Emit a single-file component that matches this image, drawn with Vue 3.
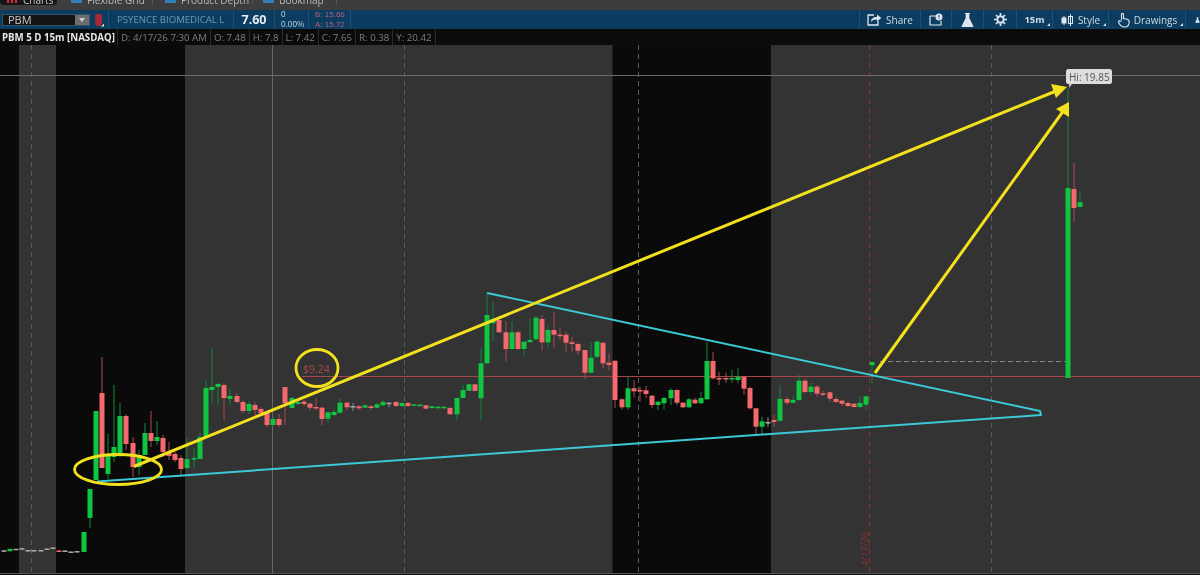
<template>
  <div class="platform">
    <div class="tabs">
      <div v-for="t in tabs" :key="t.name" class="tab" :class="{ on: t.active }" :style="{ width: t.w + 'px', paddingLeft: t.pad + 'px' }">
        <span class="tab-icon" :class="t.tone"></span>
        <span class="tab-name">{{ t.name }}</span>
      </div>
    </div>

    <div class="toolbar">
      <div class="symbol">
        <span>PBM</span>
        <span class="symbol-drop"><i></i></span>
      </div>
      <svg class="link-icon" width="11" height="14" viewBox="0 0 11 14">
        <path d="M1.500 1h5.500l1 1.500v8L6.500 13H2.500L1 10.500z" fill="#a82a35" />
        <path d="M7 13.500l3-3v3z" fill="#e4e4e4" />
      </svg>
      <span class="sep first"></span>
      <span class="company">PSYENCE BIOMEDICAL L</span>
      <span class="sep"></span>
      <span class="last">7.60</span>
      <span class="sep"></span>
      <div class="change"><span>0</span><span>0.00%</span></div>
      <span class="sep"></span>
      <div class="bidask"><span>B: 15.66</span><span>A: 15.72</span></div>
      <span class="sep"></span>

      <div class="tools">
        <span class="sep"></span>
        <div class="tool share">
          <svg width="15" height="13" viewBox="0 0 15 13" fill="none" stroke="#dfe7ee" stroke-width="1.3">
            <path d="M7 2H1v10h10V8" />
            <path d="M4 9c0-3 2-5 6-5V1.500l4.300 3.500L10 8.500V6.500c-3 0-5 .8-6 2.500z" fill="#dfe7ee" stroke="none" />
          </svg>
          <span>Share</span>
        </div>
        <span class="sep"></span>
        <div class="tool alert">
          <svg width="14" height="13" viewBox="0 0 14 13" fill="none">
            <path d="M1 3h7M1 3v9h11V8" stroke="#dfe7ee" stroke-width="1.200" />
            <circle cx="10" cy="4" r="3.500" fill="#dfe7ee" />
            <path d="M10 2v2.500M10 5.300v.8" stroke="#0c3d60" stroke-width="1" />
          </svg>
        </div>
        <span class="sep"></span>
        <div class="tool flask">
          <svg width="13" height="16" viewBox="0 0 13 16">
            <path d="M4 1h5v1H8.300v4l4 8c.2.6 0 1-.7 1H1.400c-.7 0-.9-.4-.7-1l4-8V2H4z" fill="#dfe7ee" />
          </svg>
        </div>
        <span class="sep"></span>
        <div class="tool gear">
          <svg width="13" height="13" viewBox="0 0 13 13">
            <circle cx="6.500" cy="6.500" r="3.200" fill="none" stroke="#dfe7ee" stroke-width="2" />
            <path d="M6.500 0v13M0 6.500h13M2 2l9 9M11 2l-9 9" stroke="#dfe7ee" stroke-width="1.700" stroke-dasharray="2.500 8 2.500" />
          </svg>
        </div>
        <span class="sep"></span>
        <div class="tool period"><b>15m</b><i class="corner"></i></div>
        <span class="sep"></span>
        <div class="tool style">
          <svg width="13" height="14" viewBox="0 0 13 14" fill="none" stroke="#dfe7ee">
            <path d="M3 3v9M9.500 1v12" />
            <rect x="1" y="5" width="4" height="5" fill="#dfe7ee" />
            <rect x="7.500" y="3.500" width="4" height="7" />
          </svg>
          <span>Style</span><i class="corner"></i>
        </div>
        <span class="sep"></span>
        <div class="tool drawings">
          <svg width="13" height="16" viewBox="0 0 13 16" fill="none" stroke="#dfe7ee" stroke-width="1.100">
            <path d="M4.500 8V2.300c0-1.500 2-1.500 2 0V6.500l3.500.8c1.500.4 2.300 1.200 2.200 2.700-.1 2.500-1 5-4.500 5-3 0-4.500-1-6-4.500C1 9 3 8 4.500 9.500" />
          </svg>
          <span>Drawings</span><i class="corner"></i>
        </div>
        <span class="sep"></span>
        <div class="tool flask-end">
          <svg width="13" height="16" viewBox="0 0 13 16">
            <path d="M4 1h5v1H8.300v4l4 8c.2.6 0 1-.7 1H1.400c-.7 0-.9-.4-.7-1l4-8V2H4z" fill="#dfe7ee" />
          </svg>
        </div>
      </div>
    </div>

    <div class="infobar">
      <span class="title">PBM 5 D 15m [NASDAQ]</span>
      <span v-for="c in quote" :key="c">{{ c }}</span>
    </div>

    <svg class="chart" viewBox="0 45 1200 528" width="1200" height="528">
      <rect x="0" y="45" width="1200" height="528" fill="#333333" />
      <rect v-for="b in nightBands" :key="b[0]" :x="b[0]" y="45" :width="b[1]" height="528" fill="#0a0a0a" />

      <line x1="0" y1="75.500" x2="1200" y2="75.500" stroke="#6b6b6b" />
      <line x1="272.500" y1="45" x2="272.500" y2="573" stroke="#666" />
      <line v-for="x in dashedDays" :key="x" :x1="x" y1="45" :x2="x" y2="573" stroke="#5c5c5c" stroke-dasharray="5 4" />
      <line x1="869.500" y1="45" x2="869.500" y2="573" stroke="#8c3036" stroke-dasharray="5 4" />
      <line x1="302" y1="376.500" x2="1200" y2="376.500" stroke="#a8444a" />
      <text class="price" x="303" y="373">$9.24</text>
      <text class="date" transform="translate(868 566) rotate(-90)">4/17/26</text>

      <g v-for="c in candles" :key="c[0]">
        <line :x1="c[0]" :y1="c[1]" :x2="c[0]" :y2="c[2]" :stroke="wickColor[c[5]]" />
        <rect :x="c[0] - 2.500" :y="c[3]" width="5" :height="Math.max(c[4] - c[3], 1.500)" :fill="bodyColor[c[5]]" />
      </g>

      <line x1="880" y1="361.500" x2="1065" y2="361.500" stroke="#8a8a8a" stroke-dasharray="5 3" />

      <path d="M487 293L1040 411L1041 415L97 481.500" fill="none" stroke="#3cc8d6" stroke-width="2" stroke-linejoin="round" />

      <g fill="none" stroke="#f4e11d" stroke-width="2.800">
        <ellipse cx="118" cy="469.500" rx="43.500" ry="15" />
        <ellipse cx="317" cy="368" rx="21" ry="18.500" />
        <line x1="134" y1="466.500" x2="1056" y2="91" stroke-width="3" />
        <line x1="875" y1="373" x2="1064" y2="110" stroke-width="3" />
      </g>
      <polygon points="1051,84 1067,87 1056,98" fill="#f4e11d" />
      <polygon points="1056,109 1069,102 1069,117" fill="#f4e11d" />

      <path d="M1069 88l4-5h-4z" fill="#bdbdbd" />
      <rect x="1066" y="69" width="46" height="15" rx="2.500" fill="#dcdcdc" />
      <text class="hi" x="1069" y="81">Hi: 19.85</text>
    </svg>
    <div class="chart-edge"></div>
  </div>
</template>

<script setup>
const tabs = [
  { name: 'Charts', w: 57, pad: 7, tone: 'red', active: true },
  { name: 'Flexible Grid', w: 93, pad: 11, tone: 'blue' },
  { name: 'Product Depth', w: 100, pad: 12, tone: 'blue' },
  { name: 'Bookmap', w: 84, pad: 10, tone: 'blue' },
]

const quote = ['D: 4/17/26 7:30 AM', 'O: 7.48', 'H: 7.8', 'L: 7.42', 'C: 7.65', 'R: 0.38', 'Y: 20.42']

const nightBands = [[0, 19], [56, 129], [612.5, 158.5]]
const dashedDays = [31.5, 404.5, 638.5, 991.5]

const bodyColor = { g: '#10c540', r: '#f4696d', n: '#a9a9a9' }
const wickColor = { g: '#12863a', r: '#a94a50', n: '#8a8a8a' }

// x, wick top, wick bottom, body top, body bottom, colour
const candles = [
  [4, 550, 552, 550.3, 551.5, 'n'], [10, 549, 551, 548.8, 551.2, 'g'], [16, 549, 550, 548.8, 550, 'n'],
  [22, 548, 549.5, 548.2, 549.5, 'n'], [28, 550, 551.5, 550, 551.5, 'n'], [34, 550, 551.5, 550, 551.5, 'n'],
  [41, 550, 551.5, 550, 551.5, 'n'], [47, 548.5, 550, 548.5, 550, 'n'], [53, 547.5, 549, 547.5, 549, 'n'],
  [59, 550, 552, 550.5, 552, 'r'], [65, 550.5, 552, 550.5, 552, 'n'], [71, 551.5, 553, 551.5, 553, 'n'],
  [77, 551, 552.5, 551, 552.5, 'n'],
  [84, 532, 552, 532, 552, 'g'], [90, 489, 528, 489, 518, 'g'], [96, 411, 480, 411, 480, 'g'],
  [102, 357, 468, 393, 468, 'r'], [108, 434, 479, 455, 474, 'g'], [114, 385, 462, 447, 457, 'g'],
  [120, 403, 457, 416, 453, 'g'], [126, 414, 450, 416, 444, 'r'], [133, 437, 477, 443, 467, 'r'],
  [139, 450, 475, 455, 467, 'g'], [145, 423, 455, 433, 455, 'g'], [151, 411, 447, 433, 441, 'r'],
  [157, 421, 445, 437, 441, 'g'], [163, 435, 457, 438, 452, 'r'], [169, 442, 460, 452, 456, 'r'],
  [175, 452, 462, 454, 460, 'r'], [181, 455, 475, 458, 469, 'r'], [187, 438, 470, 459, 468, 'g'],
  [194, 448, 468, 458, 459.5, 'g'], [200, 433, 459, 437, 459, 'g'], [206, 381, 437, 388, 437, 'g'],
  [212, 348, 403, 387, 390, 'g'], [218, 383, 405, 384, 387, 'g'], [224, 383, 420, 385, 398, 'r'],
  [230, 388, 405, 396, 399, 'g'], [237, 393, 403, 396, 402, 'r'], [243, 400, 413, 402, 411, 'r'],
  [249, 401, 414, 404, 411, 'g'], [255, 402, 415, 405, 410, 'r'], [261, 407, 415, 409, 413, 'r'],
  [267, 412, 427, 413, 425, 'r'], [273, 417, 426, 419, 425, 'g'], [279, 414, 427, 419, 425, 'r'],
  [285, 387, 425, 387, 403, 'r'], [292, 397, 408, 398, 408, 'g'], [298, 400, 405, 402, 404, 'g'],
  [304, 400, 406, 401.7, 404, 'r'], [310, 402.7, 410.7, 403.7, 407.7, 'r'], [316, 398, 410, 407, 408, 'r'],
  [322, 406.7, 425, 407.7, 419, 'r'], [328, 411.7, 422.7, 412.3, 418.7, 'g'], [334, 410, 416, 412, 415, 'g'],
  [340, 398, 414, 402.7, 412.7, 'g'], [347, 401.7, 410, 402.7, 407.3, 'r'], [353, 403, 411, 406, 407.3, 'n'],
  [359, 405, 410, 406.3, 408.3, 'r'], [365, 404, 408, 405.3, 407.7, 'g'], [371, 405, 410, 406.3, 408, 'r'],
  [377, 403, 408, 404.3, 407.7, 'g'], [383, 400, 406, 402, 405.3, 'g'], [389, 402.7, 407.3, 402.7, 403.7, 'n'],
  [396, 401, 407, 402, 406, 'r'], [402, 402, 407, 403, 406, 'g'], [408, 402, 407, 403, 406, 'r'],
  [414, 404, 406, 404.3, 405.7, 'g'], [420, 404, 406, 404.7, 406, 'g'], [426, 405, 409, 405.3, 408.7, 'r'],
  [432, 406, 409, 406.3, 408, 'g'], [438, 406, 409, 406.7, 408, 'g'], [444, 406, 409, 406.7, 408, 'g'],
  [450, 407, 415, 408, 414.3, 'r'], [457, 398, 420, 398, 414.3, 'g'], [463, 385, 398.3, 390, 398, 'g'],
  [469, 384, 391, 384.3, 390.7, 'g'], [475, 384, 391, 384.3, 391, 'r'], [481, 348.3, 420, 363.3, 398.3, 'g'],
  [487, 293.3, 363.3, 315, 363.3, 'g'], [493, 301.7, 341.7, 319.3, 323.3, 'g'], [499, 318, 333, 320, 332.3, 'r'],
  [506, 321.7, 361.7, 332.3, 349, 'r'], [512, 321.7, 350, 332.3, 349, 'g'], [518, 330.7, 350, 332.3, 349, 'r'],
  [524, 341.7, 355, 341.7, 349, 'g'], [530, 318.3, 342, 340, 342.3, 'g'], [536, 316, 340, 317.7, 339.3, 'g'],
  [542, 315, 350.7, 319, 342.3, 'r'], [548, 325, 348.3, 330, 342.3, 'g'], [554, 311.7, 348.3, 330, 334.7, 'r'],
  [560, 328.3, 340, 334.7, 335.8, 'r'], [566, 331.7, 351.7, 334.7, 342.7, 'r'], [572, 336.7, 351.7, 342.3, 344, 'r'],
  [578, 342.7, 355, 344, 350.7, 'r'], [585, 350, 379.3, 350, 372.7, 'r'], [591, 341.7, 373.3, 357.7, 372.7, 'g'],
  [597, 340, 358, 341.7, 356.7, 'g'], [603, 342.7, 368.3, 342.7, 363.3, 'r'], [609, 353.3, 370, 362.7, 365, 'r'],
  [615, 360.7, 408.3, 360.7, 400, 'r'], [622, 398.3, 409.3, 399.3, 407.3, 'r'], [628, 376.7, 410, 388.3, 407.3, 'g'],
  [634, 380, 397.3, 388.3, 391.3, 'r'], [640, 386.7, 401.7, 390, 391.3, 'r'], [646, 386, 398.3, 390.3, 394, 'r'],
  [652, 395, 408.3, 395.7, 405, 'r'], [658, 400.7, 410, 401.7, 405, 'g'], [664, 396.7, 409.3, 398, 403.3, 'g'],
  [671, 388.3, 405, 390, 398.3, 'g'], [677, 389.3, 405, 390, 402.7, 'r'], [683, 402, 408, 402.7, 407.3, 'r'],
  [689, 398, 408, 399.3, 407.3, 'g'], [695, 398, 404, 399.7, 403.3, 'r'], [701, 391.7, 404, 398, 403.3, 'g'],
  [707, 341.7, 399.3, 361, 399.3, 'g'], [713, 351.7, 379.3, 361, 378.3, 'r'], [719, 371.7, 385, 378, 379.3, 'r'],
  [726, 372.7, 382.7, 378, 379.3, 'r'], [732, 370, 382.7, 378, 379.3, 'g'], [738, 368.3, 383.3, 376.7, 380, 'g'],
  [744, 376.7, 395, 376.7, 388.7, 'r'], [750, 386.7, 409.3, 388, 408.3, 'r'], [756, 408.3, 435, 408.3, 426.7, 'r'],
  [762, 416.7, 435, 421.3, 426.7, 'g'], [768, 417.3, 427.3, 422, 423.3, 'n'], [774, 415, 426.7, 420, 422, 'r'],
  [780, 385, 421.7, 399, 420.7, 'g'], [787, 396.7, 405, 399, 402.7, 'r'], [793, 396.7, 403.3, 400, 402.7, 'g'],
  [799, 375, 400.7, 380.7, 400, 'g'], [805, 379, 393, 380.7, 392, 'r'], [811, 382.7, 395, 386.7, 392, 'g'],
  [817, 385, 396.7, 386.7, 393.7, 'r'], [823, 390.7, 396, 393.3, 394.7, 'r'], [830, 391.7, 401.7, 392.3, 398.7, 'r'],
  [836, 396.7, 402.7, 399, 402, 'r'], [842, 400, 406, 400.7, 403.7, 'r'], [848, 401.7, 407.3, 403, 406, 'r'],
  [854, 403, 407.5, 403.7, 407, 'r'], [860, 396, 408.3, 403, 407, 'g'], [866, 396.3, 410, 396.3, 404.7, 'g'],
  [872, 362, 384, 362, 365.3, 'g'], [1068, 88, 378, 188, 378, 'g'], [1074, 163, 222, 189, 208, 'r'],
  [1080, 191, 207, 202, 207, 'g'],
]
</script>

<style>
html,
body {
  margin: 0;
  background: #0b0b0b;
}
</style>

<style scoped>
.platform {
  width: 1200px;
  height: 575px;
  overflow: hidden;
  display: flex;
  flex-direction: column;
  font-family: "Open Sans", "Liberation Sans", sans-serif;
  filter: blur(0.35px);
}

.tabs {
  height: 10px;
  flex: none;
  box-sizing: border-box;
  padding-bottom: 5px;
  display: flex;
  align-items: flex-end;
  overflow: hidden;
  background: #3d3d3d;
  color: #b9b9b9;
  font-size: 10px;
  white-space: nowrap;
}

.tab {
  height: 18px;
  flex: none;
  box-sizing: border-box;
  display: flex;
  align-items: flex-end;
  gap: 5px;
  border-right: 1px solid #555;
}

.tab-name {
  line-height: 10px;
}

.tab.on {
  background: #141414;
  border-radius: 0 0 4px 4px;
  margin-right: 3px;
  border-right: 0;
  color: #c9c9c9;
}

.tab-icon {
  width: 11px;
  height: 16px;
  margin-bottom: 2px;
  flex: none;
}

.tab-icon.red {
  background: repeating-linear-gradient(90deg, #b8323a 0 2px, #3a1214 2px 4px);
}

.tab-icon.blue {
  background: #2f7fb8;
}

.toolbar {
  height: 19px;
  flex: none;
  display: flex;
  align-items: center;
  background: #0c3d60;
  color: #dfe7ee;
  font-size: 12px;
}

.symbol {
  width: 88px;
  height: 12px;
  margin-left: 2px;
  box-sizing: border-box;
  display: flex;
  justify-content: space-between;
  align-items: center;
  padding-left: 5px;
  background: #141414;
  border: 1px solid #33546c;
  color: #c9c9c9;
  font-size: 11px;
}

.symbol-drop {
  width: 14px;
  height: 10px;
  display: flex;
  justify-content: center;
  align-items: center;
  background: #6d6d6d;
}

.symbol-drop i {
  border: 3px solid transparent;
  border-top: 4px solid #d0d0d0;
  border-bottom: 0;
}

.link-icon {
  margin-left: 4px;
  flex: none;
}

.sep {
  width: 1px;
  height: 100%;
  flex: none;
  background: #1c5078;
}

.sep.first {
  margin-left: 3px;
}

.company {
  width: 124px;
  padding-left: 8px;
  box-sizing: border-box;
  color: #6e97b6;
  font-size: 9.600px;
  white-space: nowrap;
}

.last {
  width: 40px;
  text-align: center;
  color: #e6edf2;
  font-size: 12.500px;
  font-weight: 700;
}

.change {
  width: 33px;
  padding-left: 6px;
  box-sizing: border-box;
  display: flex;
  flex-direction: column;
  color: #b6c8d6;
  font-family: "Liberation Sans", sans-serif;
  font-size: 8.200px;
  line-height: 9.500px;
}

.bidask {
  width: 41px;
  padding-left: 6px;
  box-sizing: border-box;
  display: flex;
  flex-direction: column;
  color: #b0637c;
  font-family: "Liberation Sans", sans-serif;
  font-size: 8px;
  line-height: 9.500px;
  white-space: nowrap;
}

.tools {
  margin-left: auto;
  height: 100%;
  display: flex;
  align-items: center;
}

.tool {
  height: 100%;
  position: relative;
  display: flex;
  align-items: center;
  justify-content: center;
  box-sizing: border-box;
  gap: 4px;
  color: #cfdbe4;
  font-size: 10px;
}

.tool b {
  font-size: 9.500px;
}

.share {
  width: 60px;
}

.alert {
  width: 30px;
}

.flask {
  width: 31px;
}

.gear {
  width: 32px;
}

.period {
  width: 35px;
}

.style {
  width: 55px;
}

.drawings {
  width: 76px;
}

.flask-end {
  width: 14px;
  justify-content: flex-start;
  padding-left: 9px;
  overflow: hidden;
}

.corner {
  position: absolute;
  right: 2px;
  bottom: 3px;
  border-left: 3px solid transparent;
  border-bottom: 3px solid #dfe7ee;
}

.infobar {
  height: 16px;
  flex: none;
  display: flex;
  align-items: center;
  background: #0b0b0b;
  color: #7f7f7f;
  font-size: 9.700px;
  white-space: nowrap;
}

.infobar span {
  height: 100%;
  display: flex;
  align-items: center;
  padding: 0 3px;
  border-right: 1px solid #2c2c2c;
}

.infobar .title {
  padding: 0 2px 0 2px;
  color: #e8e8e8;
  font-weight: 700;
}

.chart {
  display: block;
  flex: none;
}

.chart-edge {
  height: 1px;
  flex: none;
  background: #555;
}

.price {
  fill: #b3464c;
  font-size: 10.500px;
}

.date {
  fill: #8a2f36;
  font-size: 9.500px;
}

.hi {
  fill: #555;
  font-size: 10px;
}
</style>
